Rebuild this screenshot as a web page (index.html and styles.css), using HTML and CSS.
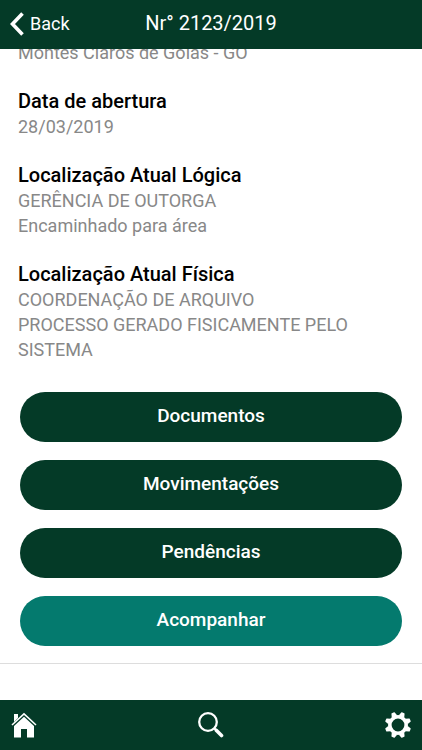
FILE: index.html
```
<!DOCTYPE html>
<html lang="pt-BR">
<head>
    <meta charset="UTF-8">
    <meta name="viewport" content="width=device-width, initial-scale=1.0">
    <title>Nr° 2123/2019</title>
    <link rel="stylesheet" href="styles.css">
</head>
<body>
<header class="topbar">
    <a class="back" href="#">
        <svg width="14" height="24" viewBox="0 0 14 24"><path d="M12.5 1.500 2.500 12l10 10.500" fill="none" stroke="#fff" stroke-width="3.600"/></svg>
        Back
    </a>
    <h1>Nr° 2123/2019</h1>
</header>
<main>
    <dl class="details">
        <div class="item">
            <dd>Montes Claros de Goiás - GO</dd>
        </div>
        <div class="item">
            <dt>Data de abertura</dt>
            <dd>28/03/2019</dd>
        </div>
        <div class="item">
            <dt>Localização Atual Lógica</dt>
            <dd>GERÊNCIA DE OUTORGA</dd>
            <dd>Encaminhado para área</dd>
        </div>
        <div class="item">
            <dt>Localização Atual Física</dt>
            <dd>COORDENAÇÃO DE ARQUIVO</dd>
            <dd>PROCESSO GERADO FISICAMENTE PELO SISTEMA</dd>
        </div>
    </dl>
    <div class="actions">
        <button type="button">Documentos</button>
        <button type="button">Movimentações</button>
        <button type="button">Pendências</button>
        <button type="button" class="follow">Acompanhar</button>
    </div>
</main>
<nav class="tabbar">
    <a href="#" aria-label="Início">
        <svg width="26" height="26" viewBox="0 0 26 26" fill="#fff">
            <path d="M3 2h4v4L3 10z"/>
            <path d="M1 13 13 1.800 25 13" fill="none" stroke="#fff" stroke-width="1.600"/>
            <path d="M13 4.800 23 14v11.500h-7V17h-6v8.500H3V14z"/>
        </svg>
    </a>
    <a href="#" aria-label="Buscar">
        <svg width="26" height="26" viewBox="0 0 26 26" fill="none" stroke="#fff">
            <circle cx="10" cy="10" r="8.800" stroke-width="2.300"/>
            <path d="m16.500 16.500 2 2" stroke-width="2.400"/>
            <path d="m18.500 18.500 5 5" stroke-width="3.600" stroke-linecap="round"/>
        </svg>
    </a>
    <a href="#" aria-label="Configurações">
        <svg width="26" height="26" viewBox="-13 -13 26 26" fill="none" stroke="#fff">
            <circle r="8.200" stroke-width="3.600"/>
            <g fill="#fff" stroke="none">
                <path id="tooth" d="M-3-9-1.800-12.800q.2-.4.600-.4h2.400q.4 0 .6.400L3-9z" transform="rotate(22.500)"/>
                <use href="#tooth" transform="rotate(45)"/>
                <use href="#tooth" transform="rotate(90)"/>
                <use href="#tooth" transform="rotate(135)"/>
                <use href="#tooth" transform="rotate(180)"/>
                <use href="#tooth" transform="rotate(225)"/>
                <use href="#tooth" transform="rotate(270)"/>
                <use href="#tooth" transform="rotate(315)"/>
            </g>
        </svg>
    </a>
</nav>
</body>
</html>
```
FILE: styles.css
```
body {
    display: flex;
    flex-direction: column;
    height: 100vh;
    margin: 0;
    font-family: Roboto, "Liberation Sans", sans-serif;
    font-size: 20px;
    line-height: 25px;
    background-color: #fff;
}

.topbar {
    display: grid;
    grid-template-columns: 1fr auto 1fr;
    align-items: center;
    flex: none;
    height: 49px;
    padding: 0 10px 2px;
    box-sizing: border-box;
    color: #fff;
    background-color: #043a27;
}

.topbar h1 {
    margin: 0;
    font-size: 20px;
    font-weight: 400;
}

.back {
    display: flex;
    align-items: center;
    gap: 6px;
    font-size: 18px;
    color: #fff;
    text-decoration: none;
}

main {
    flex: 1;
    min-height: 0;
    overflow: hidden;
}

.details {
    display: flex;
    flex-direction: column;
    gap: 24px;
    margin: -9px 18px 0;
}

dt {
    font-weight: 500;
    color: #000;
}

dd {
    margin: 0;
    font-size: 18px;
    color: #888;
}

.actions {
    display: flex;
    flex-direction: column;
    gap: 18px;
    padding: 30px 20px 17px;
    border-bottom: 1px solid #ddd;
}

.actions button {
    height: 50px;
    padding: 0 0 4px;
    border: 0;
    border-radius: 25px;
    font: inherit;
    font-size: 19px;
    font-weight: 500;
    color: #fff;
    background-color: #043a27;
    cursor: pointer;
}

.actions .follow {
    background-color: #047a6e;
}

.tabbar {
    display: flex;
    align-items: center;
    justify-content: space-between;
    flex: none;
    height: 50px;
    padding: 0 11px;
    background-color: #043a27;
}

.tabbar svg {
    display: block;
}
```
